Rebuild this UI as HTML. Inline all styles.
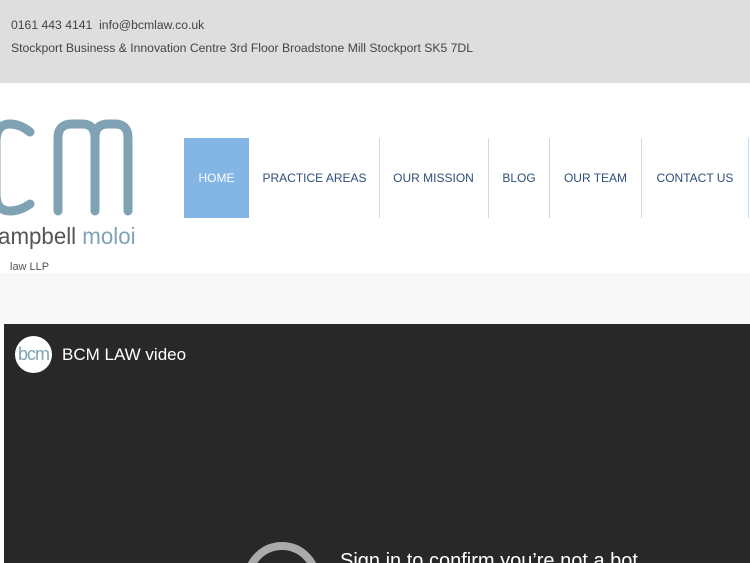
<!DOCTYPE html>
<html style="overflow:hidden;width:750px;height:563px"><head><style>
body{margin:0;width:750px;height:563px;overflow:hidden;background:#fff;font-family:"Liberation Sans",sans-serif;position:relative}
.top{position:absolute;left:0;top:0;width:750px;height:83px;background:#dedede;color:#444;font-size:12.2px}
.top div{position:absolute;left:11px}
.nav{position:absolute;top:138px;height:80px;font-size:12px;color:#2d4f7a;line-height:80px}
.nav span{position:absolute;top:0;height:80px;text-align:center}
.sep{position:absolute;top:138px;width:1px;height:80px;background:#c5dbe8}
.gray{position:absolute;left:0;top:273px;width:750px;height:51px;background:#f8f8f8}
.vid{position:absolute;left:4px;top:324px;width:746px;height:239px;background:#282828;overflow:hidden}
</style></head><body>
<div class="top"><div style="top:18px">0161 443 4141&nbsp; info@bcmlaw.co.uk</div><div style="top:41px">Stockport Business &amp; Innovation Centre 3rd Floor Broadstone Mill Stockport SK5 7DL</div></div>
<svg style="position:absolute;left:0;top:110px" width="140" height="165">
<g fill="none" stroke="#7fa3b5" stroke-width="9" stroke-linecap="round">
<path d="M30 22 Q20 14 10 14 Q-4 14 -4 32 L-4 84 Q-4 101 10 101 Q20 101 30 94"/>
<path d="M58 101 L58 28 Q58 14 72 14 L82 14 Q95 14 95 28 L95 101"/>
<path d="M95 28 Q95 14 108 14 L115 14 Q128 14 128 28 L128 101"/>
</g>
<text x="-2" y="134" font-size="23" fill="#555" transform="scale(0.97,1)" font-family="Liberation Sans Narrow,Liberation Sans,sans-serif">ampbell <tspan fill="#7fa3b5">moloi</tspan></text>
<text x="10" y="160" font-size="11" fill="#555" font-family="Liberation Sans Narrow,Liberation Sans,sans-serif">law LLP</text>
</svg>
<div style="position:absolute;left:184px;top:138px;width:65px;height:80px;background:#84b6e5"></div>
<div class="nav" style="left:0;width:750px">
<span style="left:184px;width:65px;color:#fff">HOME</span>
<span style="left:258px;width:113px">PRACTICE AREAS</span>
<span style="left:385px;width:97px">OUR MISSION</span>
<span style="left:494px;width:50px">BLOG</span>
<span style="left:555px;width:81px">OUR TEAM</span>
<span style="left:648px;width:94px">CONTACT US</span>
</div>
<div class="sep" style="left:379px"></div><div class="sep" style="left:488px"></div><div class="sep" style="left:549px"></div><div class="sep" style="left:641px"></div><div class="sep" style="left:748px"></div>
<div class="gray"></div>
<div class="vid">
<div style="position:absolute;left:11px;top:12px;width:37px;height:37px;border-radius:50%;background:#fff;color:#7fa3b5;font-size:18px;line-height:37px;text-align:center;letter-spacing:-1px;overflow:hidden">bcm</div>
<div style="position:absolute;left:58px;top:21px;color:#fff;font-size:17px">BCM LAW video</div>
<div style="position:absolute;left:240px;top:218px;width:60px;height:60px;border-radius:50%;border:8px solid #aaa"></div>
<div style="position:absolute;left:336px;top:226px;color:#fff;font-size:20px">Sign in to confirm you’re not a bot</div>
</div>
</body></html>
